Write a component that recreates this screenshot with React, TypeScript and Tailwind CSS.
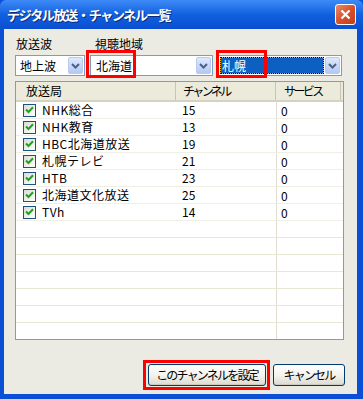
import type { ReactNode } from "react";

const FONT = { fontFamily: '"Noto Sans CJK JP", "Noto Sans", sans-serif' };

const STATIONS = [
  { name: "NHK総合", ch: "15", sv: "0" },
  { name: "NHK教育", ch: "13", sv: "0" },
  { name: "HBC北海道放送", ch: "19", sv: "0" },
  { name: "札幌テレビ", ch: "21", sv: "0" },
  { name: "HTB", ch: "23", sv: "0" },
  { name: "北海道文化放送", ch: "25", sv: "0" },
  { name: "TVh", ch: "14", sv: "0" },
];

function DropButton() {
  return (
    <div className="flex h-[17px] w-[15px] items-center justify-center rounded-[2px] border border-[#b9cbf3] bg-gradient-to-b from-[#dfe8fd] to-[#b3c8f3]">
      <svg width="9" height="6" viewBox="0 0 9 6">
        <path d="M1 1l3.5 3.5L8 1" stroke="#4d6185" strokeWidth="2" fill="none" />
      </svg>
    </div>
  );
}

function Combo({ width, children }: { width: string; children: ReactNode }) {
  return (
    <div className={`${width} flex h-[21px] items-center gap-[1px] border border-[#7f9db9] bg-white pl-[1px] pr-[1px]`}>
      <div className="flex h-full min-w-0 flex-1 items-center">{children}</div>
      <DropButton />
    </div>
  );
}

function Check() {
  return (
    <div className="flex h-[13px] w-[13px] items-center justify-center border border-[#1c5180] bg-gradient-to-br from-[#dcdcd5] to-white">
      <svg width="9" height="8" viewBox="0 0 9 8">
        <path d="M1 3.5l2.5 2.5L8 1.2" stroke="#21a121" strokeWidth="2" fill="none" />
      </svg>
    </div>
  );
}

function XpButton({ children, w }: { children: ReactNode; w: string }) {
  return (
    <div
      className={`${w} flex h-[22px] items-center justify-center whitespace-nowrap rounded-[3px] border border-[#003c74] bg-gradient-to-b from-white via-[#f4f3ee] to-[#dcdad0] text-[12px] tracking-[-1.8px] text-black shadow-[inset_0_-1px_0_#cdcac0]`}
    >
      {children}
    </div>
  );
}

export default function App() {
  const empty = Array.from({ length: 7 });
  return (
    <div className="flex h-[399px] w-[363px] flex-col overflow-hidden bg-[#0a4fd6]" style={FONT}>
      {/* title bar */}
      <div className="flex h-[29px] items-center justify-between rounded-t-[6px] bg-gradient-to-b from-[#3d8af7] via-[#1160e0] to-[#0a4fd0] pl-[7px] pr-[7px]">
        <span className="whitespace-nowrap text-[13px] font-bold tracking-[-1.3px] text-white [text-shadow:1px_1px_0_#0a2a7a]">
          デジタル放送・チャンネル一覧
        </span>
        <div className="flex h-[21px] w-[21px] items-center justify-center rounded-[3px] border border-white bg-gradient-to-br from-[#e88a6a] via-[#d9502b] to-[#c33d18]">
          <svg width="11" height="11" viewBox="0 0 11 11">
            <path d="M1.5 1.5l8 8M9.5 1.5l-8 8" stroke="white" strokeWidth="2.2" />
          </svg>
        </div>
      </div>

      {/* body */}
      <div className="ml-[4px] mr-[6px] mb-[5px] flex flex-1 flex-col bg-[#ecebe3] px-[11px] text-[12px] text-black">
        <div className="mt-[6px] flex h-[17px] items-center">
          <span className="w-[80px] pl-[1px]">放送波</span>
          <span>視聴地域</span>
        </div>
        <div className="mt-[3px] flex h-[21px] items-center gap-[5px]">
          <Combo width="w-[70px]">
            <span className="pl-[3px]">地上波</span>
          </Combo>
          <div className="relative">
            <Combo width="w-[123px]">
              <span className="pl-[4px]">北海道</span>
            </Combo>
            <div className="absolute left-[-4px] top-[-5px] h-[28px] w-[50px] border-[3px] border-[#ff0000]" />
          </div>
          <div className="relative">
            <Combo width="w-[124px]">
              <div className="h-[17px] w-full border border-dotted border-black bg-[#f0b000]">
                <div className="flex h-full items-center bg-[#0d5fc2] pl-[1px] text-white">札幌</div>
              </div>
            </Combo>
            <div className="absolute left-[-2px] top-[-5px] h-[28px] w-[51px] border-[3px] border-[#ff0000]" />
          </div>
        </div>

        {/* list */}
        <div className="mt-[5px] flex h-[259px] w-[329px] flex-col overflow-hidden border border-[#7f9db9] bg-white">
          <div className="flex h-[20px] shrink-0 items-stretch border-b-[2px] border-[#d6d2c2] bg-[#ebeadb]">
            <div className="flex w-[160px] items-center border-r border-[#c7c5b2] pl-[10px]">放送局</div>
            <div className="flex w-[100px] items-center border-r border-[#c7c5b2] pl-[7px] tracking-[-2.6px]">チャンネル</div>
            <div className="flex w-[65px] items-center border-r border-[#c7c5b2] pl-[8px] tracking-[-2.6px]">サービス</div>
            <div className="flex-1" />
          </div>
          <div className="flex flex-1 flex-col">
            {STATIONS.map((s) => (
              <div key={s.name} className="flex h-[17px] shrink-0 items-center border-b border-[#f0efe6]">
                <div className="flex w-[160px] items-center gap-[6px] pl-[7px]">
                  <Check />
                  <span className="whitespace-nowrap tracking-[0.5px]">{s.name}</span>
                </div>
                <div className="w-[100px] pl-[6px]">{s.ch}</div>
                <div className="h-full w-[65px] border-l border-[#e0ddd0] pl-[4px] leading-[17px]">{s.sv}</div>
              </div>
            ))}
            {empty.map((_, i) => (
              <div key={i} className="flex h-[17px] shrink-0 border-b border-[#e9e7d6]">
                <div className="w-[260px]" />
                <div className="h-full w-[65px] border-l border-[#e0ddd0]" />
              </div>
            ))}
            <div className="flex flex-1">
              <div className="w-[260px]" />
              <div className="w-[65px] border-l border-[#e0ddd0]" />
            </div>
          </div>
        </div>

        {/* buttons */}
        <div className="mt-[24px] flex justify-end gap-[7px] pr-[1px]">
          <div className="relative">
            <XpButton w="w-[118px]">このチャンネルを設定</XpButton>
            <div className="absolute left-[-5px] top-[-4px] h-[30px] w-[127px] border-[3px] border-[#ff0000]" />
          </div>
          <XpButton w="w-[72px]">キャンセル</XpButton>
        </div>
      </div>
    </div>
  );
}
